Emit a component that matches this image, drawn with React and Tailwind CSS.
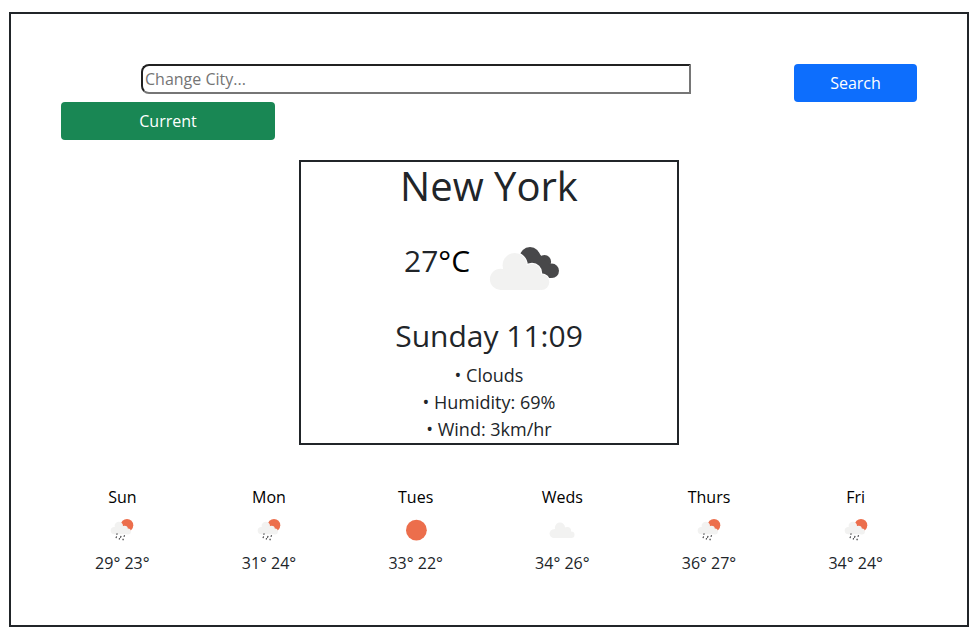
import React from "react";

const forecast = [
  { day: "Sun", icon: "rain", temps: "29° 23°" },
  { day: "Mon", icon: "rain", temps: "31° 24°" },
  { day: "Tues", icon: "sun", temps: "33° 22°" },
  { day: "Weds", icon: "cloud", temps: "34° 26°" },
  { day: "Thurs", icon: "rain", temps: "36° 27°" },
  { day: "Fri", icon: "rain", temps: "34° 24°" },
];

function CloudShape() {
  return (
    <>
      <circle cx="20.5" cy="44.3" r="10.6" />
      <circle cx="34.7" cy="30.2" r="12.1" />
      <circle cx="52" cy="38" r="9.2" />
      <circle cx="61.4" cy="47.1" r="7.9" />
      <path d="M20.5 54.9V34L46 33L60 42V55H20.5Z" />
    </>
  );
}

function BrokenClouds() {
  return (
    <svg width="90" height="65" viewBox="0 0 90 65" className="shrink-0">
      <g fill="#48484a">
        <circle cx="50" cy="22.2" r="10.2" />
        <circle cx="64.5" cy="26.7" r="6.6" />
        <circle cx="71.8" cy="35.8" r="7.2" />
        <path d="M44 28L58 17L70 31L71 43L58 43Z" />
      </g>
      <g fill="#fff" stroke="#fff" strokeWidth="2">
        <CloudShape />
      </g>
      <g fill="#f2f2f1">
        <CloudShape />
      </g>
    </svg>
  );
}

function SmallIcon({ type }) {
  if (type === "sun") {
    return (
      <svg width="50" height="50" viewBox="0 0 50 50">
        <circle cx="25.4" cy="25.2" r="10.4" fill="#ec6e4c" />
      </svg>
    );
  }
  if (type === "cloud") {
    return (
      <svg width="50" height="50" viewBox="0 0 50 50">
        <g fill="#f2f2f1" transform="translate(8.4 10) scale(0.42)">
          <CloudShape />
        </g>
      </svg>
    );
  }
  return (
    <svg width="50" height="50" viewBox="0 0 50 50">
      <circle cx="30" cy="20.2" r="6.3" fill="#ec6e4c" />
      <g fill="#f2f2f1">
        <circle cx="17.3" cy="25.6" r="3.6" />
        <circle cx="21.8" cy="20.9" r="4.2" />
        <circle cx="27.6" cy="23.9" r="3.2" />
        <circle cx="31" cy="26.5" r="2.9" />
        <path d="M17.3 29.2V22L25.5 21L30.5 25V29.3H17.3Z" />
      </g>
      <path
        d="M20.2 28.4L19.7 29.7M19.6 31.4L19 33.1M22.6 33.1L22.2 34.5M24.1 30.9L23.4 32.7M27.6 30.2L26.9 31.7M26.4 33.7L25.8 35.3"
        stroke="#48484a"
        strokeWidth="1.2"
        fill="none"
      />
    </svg>
  );
}

export default function App() {
  return (
    <div className="flow-root h-[641px] bg-white font-['Open_Sans',sans-serif] text-[16px] leading-6 text-[#212529]">
      <main className="ml-[9px] mt-3 h-[615px] w-[960px] border-2 border-[#212529] pt-[50px]">
        <form className="flex items-start pl-[130px]" onSubmit={(e) => e.preventDefault()}>
          <input
            type="text"
            placeholder="Change City..."
            className="h-[30px] w-[550px] rounded-l-lg border-2 border-b-[#767676] border-l-[#212121] border-r-[#767676] border-t-[#212121] px-0.5 placeholder:text-[#757575]"
          />
          <button className="ml-[103px] h-[38px] w-[123px] rounded bg-[#0d6efd] text-white">Search</button>
        </form>
        <button className="ml-[50px] block h-[38px] w-[214px] rounded bg-[#198754] text-white">Current</button>

        <section className="ml-[288px] mt-5 h-[285px] w-[380px] border-2 border-[#212529] text-center">
          <h1 className="text-[40px] leading-[48px]">New York</h1>
          <div className="mt-[25px] flex h-[65px] pl-[103px]">
            <div className="mt-[3px] w-[76px] text-left text-[30px] leading-[45px]">
              27<a className="text-black">°C</a>
            </div>
            <BrokenClouds />
          </div>
          <h2 className="mt-[18px] text-[30px] leading-9">Sunday 11:09</h2>
          <ul className="mt-2 text-[18px] leading-[27px]">
            <li>• Clouds</li>
            <li>• Humidity: 69%</li>
            <li>• Wind: 3km/hr</li>
          </ul>
        </section>

        <section className="ml-[38px] mt-10 grid w-[880px] grid-cols-6 text-center">
          {forecast.map((f) => (
            <div key={f.day} className="flex flex-col items-center">
              <div className="text-black">{f.day}</div>
              <div className="-my-1">
                <SmallIcon type={f.icon} />
              </div>
              <div>{f.temps}</div>
            </div>
          ))}
        </section>
      </main>
    </div>
  );
}
